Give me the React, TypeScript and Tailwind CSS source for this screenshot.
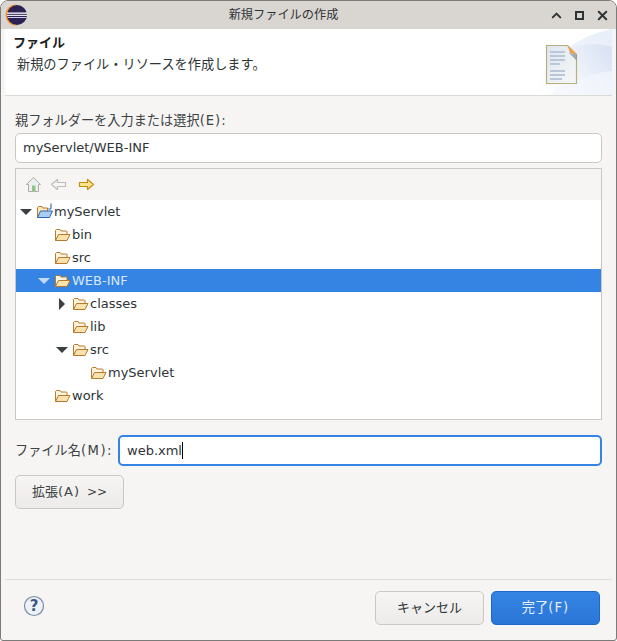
import { ChevronUp, X } from "lucide-react";

const font = "[font-family:'DejaVu_Sans','Noto_Sans_CJK_JP',sans-serif]";

const EclipseLogo = () => (
  <svg width="24" height="24" viewBox="0 0 24 24">
    <path d="M12 1.500a10.500 10.500 0 1 0 0 21c.6 0 1.200 0 1.700-.1A10.500 10.500 0 0 1 13.700 1.600c-.5-.1-1.100-.1-1.700-.1z" fill="#f7941e" />
    <circle cx="13" cy="12" r="10" fill="#2c2255" />
    <rect x="3" y="9.500" width="20" height="1.300" fill="#fff" />
    <rect x="3" y="11.800" width="20" height="1.200" fill="#e8e6f0" />
    <rect x="3.500" y="14" width="19" height="1" fill="#cfcbe0" />
  </svg>
);

const Folder = () => (
  <svg width="17" height="16" viewBox="0 0 17 16" className="shrink-0">
    <path d="M1.500 13.500V3.500l1-1h3.500l1 1.500h5.500l.5.500V7" fill="#fdf3dc" stroke="#b7792e" />
    <path d="M1.500 13.500L4.500 7.500H16l-3 6z" fill="#fbe2ad" stroke="#b7792e" strokeLinejoin="round" />
  </svg>
);

const ProjectFolder = () => (
  <svg width="18" height="17" viewBox="0 0 18 17" className="shrink-0">
    <path d="M1.500 14.500V4.500l1-1h3.500l1 1.500h4.500V8" fill="#fbe7bd" stroke="#b7792e" />
    <path d="M1.500 14.500L4.500 8H16.500l-3 6.500z" fill="#a9cdf2" stroke="#2c66b0" strokeLinejoin="round" />
    <path d="M15 .5V5c0 1.500-2 1.500-2.500.5" fill="none" stroke="#3b6fb8" strokeWidth="1.200" />
  </svg>
);

const rows = [
  { label: "myServlet", indent: "pl-[4px]", arrow: "down", project: true },
  { label: "bin", indent: "pl-[22px]", arrow: "" },
  { label: "src", indent: "pl-[22px]", arrow: "" },
  { label: "WEB-INF", indent: "pl-[22px]", arrow: "down", selected: true },
  { label: "classes", indent: "pl-[40px]", arrow: "right" },
  { label: "lib", indent: "pl-[40px]", arrow: "" },
  { label: "src", indent: "pl-[40px]", arrow: "down" },
  { label: "myServlet", indent: "pl-[58px]", arrow: "" },
  { label: "work", indent: "pl-[22px]", arrow: "" },
];

const TreeRow = ({ row }: { row: (typeof rows)[number] }) => (
  <div className={`flex h-[23px] items-center ${row.indent} ${row.selected ? "bg-[#3584e4] text-[#d8e7fa]" : "text-[#2e3436]"}`}>
    <div className="flex w-[16px] shrink-0 items-center justify-start">
      {row.arrow === "down" && (
        <div className={`h-0 w-0 shrink-0 border-x-[6px] border-t-[6px] border-x-transparent ${row.selected ? "border-t-[#c3d9f6]" : "border-t-[#3a3f41]"}`} />
      )}
      {row.arrow === "right" && (
        <div className="ml-[3px] h-0 w-0 border-y-[6px] border-l-[6px] border-y-transparent border-l-[#3a3f41]" />
      )}
    </div>
    {row.project ? <ProjectFolder /> : <Folder />}
    <span className={row.project ? "" : "ml-[1px]"}>{row.label}</span>
  </div>
);

const App = () => {
  return (
    <div className={`flex h-[641px] w-[617px] flex-col overflow-hidden rounded-t-[8px] rounded-b-[3px] border border-[#7b7b79] bg-[#f6f5f4] text-[13px] text-[#2e3436] ${font}`}>
      <div className="flex h-[28px] shrink-0 items-center bg-[#d9d5d1] pl-[3px] pr-[6px]">
        <EclipseLogo />
        <div className="flex-1 pr-[10px] text-center text-[12.200px] text-[#2e3436]">新規ファイルの作成</div>
        <div className="flex items-center gap-[8px] text-[#2e3436]">
          <ChevronUp size={15} strokeWidth={3.200} />
          <div className="flex w-[15px] justify-center">
            <div className="h-[9px] w-[9px] border-2 border-[#2e3436]" />
          </div>
          <X size={15} strokeWidth={3.200} />
        </div>
      </div>

      <div className="mx-[4px] flex h-[67px] shrink-0 justify-between border-b border-[#dcdad7] bg-white">
        <div className="pl-[8px] pt-[5px]">
          <div className="text-[13px] font-bold leading-[17px] text-[#1c1c1c]">ファイル</div>
          <div className="mt-[5px] pl-[4px] text-[13.200px] leading-[17px]">新規のファイル・リソースを作成します。</div>
        </div>
        <svg width="76" height="66" viewBox="0 0 76 66" className="shrink-0">
          <defs>
            <linearGradient id="bannerBg" x1="0" y1="0.8" x2="1" y2="0.2">
              <stop offset="0" stopColor="#ffffff" />
              <stop offset="0.55" stopColor="#ebf0f9" />
              <stop offset="1" stopColor="#d6e0f4" />
            </linearGradient>
            <linearGradient id="page" x1="0" y1="0" x2="1" y2="1">
              <stop offset="0" stopColor="#dfe6f0" />
              <stop offset="1" stopColor="#f7f8f5" />
            </linearGradient>
          </defs>
          <path d="M0 66C8 30 40 8 76 0v66z" fill="url(#bannerBg)" />
          <path d="M30 22C45 14 62 14 76 18V0C60 4 44 10 30 22z" fill="#eef2fa" opacity="0.8" />
          <path d="M20 60C40 52 60 42 76 42v24H16z" fill="#f4f7fc" opacity="0.7" />
          <path d="M10.500 16.500h21l9 9v29h-30z" fill="url(#page)" stroke="#b5b07e" strokeWidth="1.200" />
          <path d="M31.500 16l9.500 9.500-7-1.500z" fill="#ee9f4a" />
          <path d="M33 24l8 1.500V32z" fill="#8b9a9e" opacity="0.8" />
          <path d="M14 22h15v2H14zM14 26h15v2H14zM14 30h15v2H14zM14 34h10v2H14zM14 41h15v2H14zM14 45h15v2H14zM14 49h12v2H14z" fill="#bac6da" />
        </svg>
      </div>

      <div className="flex flex-1 flex-col px-[14px] pt-[16px]">
        <div className="h-[18px] text-[13.200px] leading-[18px] text-[#3d4345]">
          親フォルダーを入力または選択<span className="tracking-[1px]">(E):</span>
        </div>
        <div className="mt-[3px] flex h-[30px] items-center rounded-[5px] border border-[#cdc7c2] bg-white pl-[7px]">
          myServlet/WEB-INF
        </div>

        <div className="mt-[5px] flex h-[252px] flex-col border border-[#cdc7c2] bg-white">
          <div className="flex h-[31px] shrink-0 items-center bg-[#f6f5f4] pl-[9px]">
            <svg width="17" height="17" viewBox="0 0 17 17">
              <path d="M8.500 1.500L1.500 8.500H3.500v7h10v-7h2z" fill="#e9eff2" stroke="#b5ab9c" />
              <rect x="7" y="9.500" width="3.500" height="6" fill="#8fc48b" />
            </svg>
            <svg width="17" height="17" viewBox="0 0 17 17" className="ml-[8px]">
              <path d="M1.500 8.500L7.500 3.500V6.500h8v4h-8v3z" fill="#f6f5f4" stroke="#bdbdba" strokeWidth="1.200" strokeLinejoin="round" />
            </svg>
            <svg width="17" height="17" viewBox="0 0 17 17" className="ml-[11px]">
              <path d="M15.500 8.500L9.500 3.500V6.500h-8v4h8v3z" fill="#fde58a" stroke="#c98a14" strokeWidth="1.200" strokeLinejoin="round" />
            </svg>
          </div>
          {rows.map((row, i) => (
            <TreeRow key={i} row={row} />
          ))}
        </div>

        <div className="mt-[15px] flex items-center">
          <div className="w-[103px] shrink-0 text-[13.200px] text-[#3d4345]">
            ファイル名<span className="tracking-[1.500px]">(M):</span>
          </div>
          <div className="flex h-[31px] flex-1 items-center rounded-[5px] border-2 border-[#3584e4] bg-white pl-[7px]">
            web.xml<span className="h-[17px] w-px bg-black" />
          </div>
        </div>

        <button className="mt-[9px] flex h-[34px] w-[109px] items-center justify-center rounded-[5px] border border-[#cdc7c2] bg-gradient-to-b from-[#f6f5f4] to-[#edebe9] text-[13px] text-[#3d4345]">
          拡張<span className="tracking-[1px]">(A)</span>
          <span className="ml-[7px] text-[12px]">&gt;&gt;</span>
        </button>
      </div>

      <div className="mx-[4px] flex h-[61px] shrink-0 items-start justify-between border-t border-[#dedcd9] pl-[18px] pr-[12px] pt-[11px]">
        <svg width="22" height="22" viewBox="0 0 22 22" className="mt-[4px]">
          <circle cx="11" cy="11" r="9.500" fill="#eef1f6" stroke="#7a8cab" strokeWidth="1.200" />
          <text x="11" y="16" textAnchor="middle" fontSize="15" fontWeight="bold" fill="#3f5685" fontFamily="DejaVu Sans">?</text>
        </svg>
        <div className="flex gap-[7px]">
          <button className="h-[34px] w-[109px] rounded-[5px] border border-[#cdc7c2] bg-gradient-to-b from-[#f6f5f4] to-[#edebe9] text-[13px] text-[#2e3436]">
            キャンセル
          </button>
          <button className="h-[34px] w-[109px] rounded-[5px] border border-[#1b6acb] bg-gradient-to-b from-[#3584e4] to-[#2a76d6] text-[13.200px] text-[#e6effb]">
            完了<span className="tracking-[1px]">(F)</span>
          </button>
        </div>
      </div>
    </div>
  );
};

export default App;
